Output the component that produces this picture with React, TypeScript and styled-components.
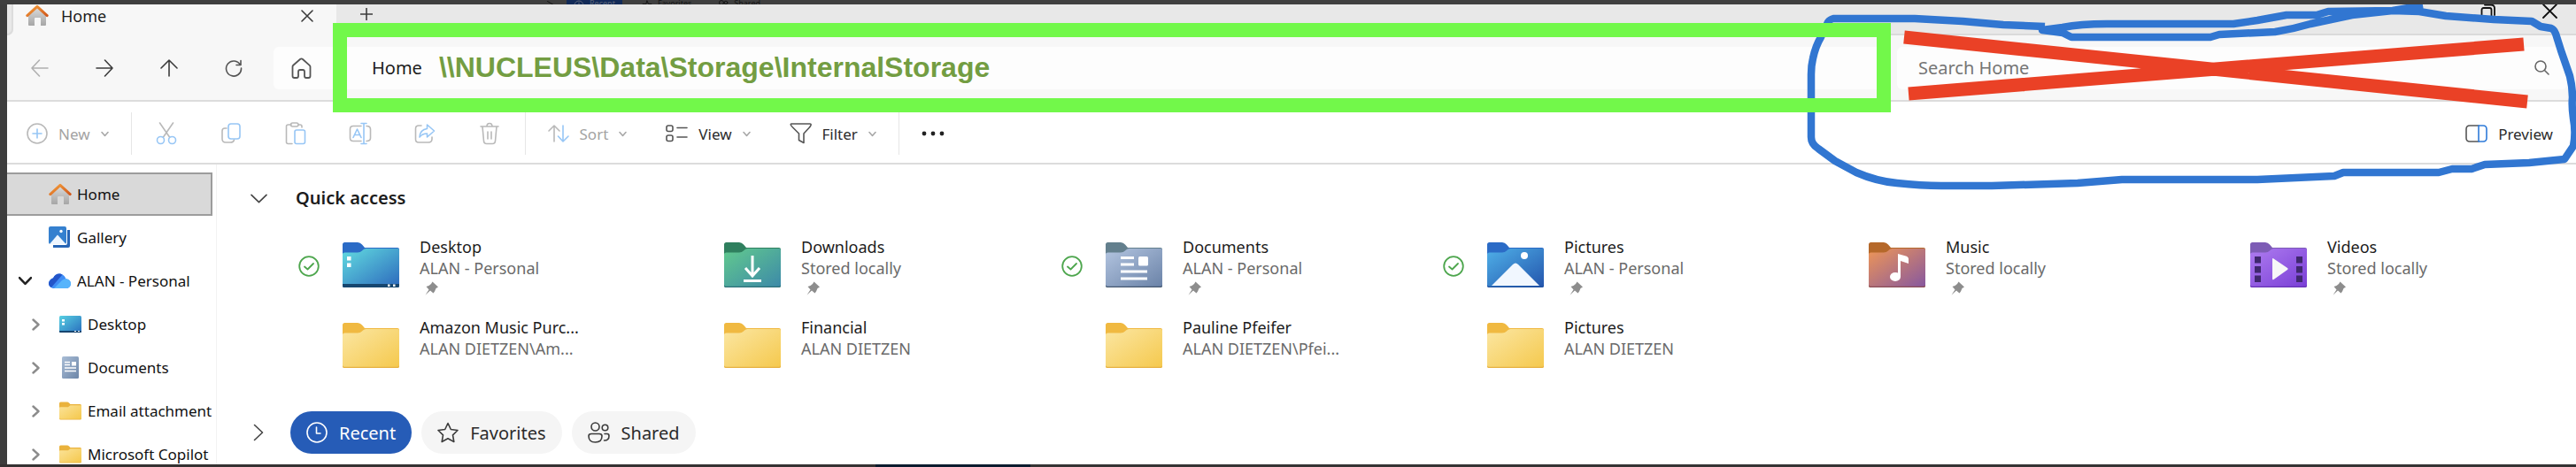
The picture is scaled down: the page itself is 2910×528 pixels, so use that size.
import React from 'react';
import styled, { createGlobalStyle, css } from 'styled-components';

const GlobalStyle = createGlobalStyle`
  *, *::before, *::after { box-sizing: border-box; }
  html, body { margin: 0; }
  body { background: #3d3d3d; font-family: "Noto Sans", "Open Sans", sans-serif; color: #1c1c1c; }
  button, input { font: inherit; color: inherit; margin: 0; }
  svg { display: block; flex: none; }
`;

/* ---------- shell ---------- */

const Screen = styled.div`
  display: flex;
  flex-direction: column;
  height: 100vh;
  overflow: hidden;
`;

const BackdropTop = styled.div`
  display: flex;
  flex: none;
  align-items: flex-start;
  gap: 14px;
  height: 5px;
  padding-left: 617px;
  overflow: hidden;
  background: #3f3f3f;
  color: #161616;
  font-size: 9px;
  line-height: 8px;
`;

const BackdropItem = styled.span<{ $active?: boolean }>`
  display: flex;
  gap: 6px;
  height: 12px;
  padding: 0 8px;
  background: ${(p) => (p.$active ? '#122a57' : 'transparent')};
  color: ${(p) => (p.$active ? '#5a6478' : 'inherit')};
`;

const BackdropBottom = styled.div`
  flex: none;
  height: 3px;
  background: linear-gradient(90deg, #353232 34%, #0b1c2e 34% 40%, #353434 40%);
`;

const Window = styled.div`
  position: relative;
  display: flex;
  flex: 1;
  flex-direction: column;
  min-height: 0;
  margin-left: 8px;
  overflow: hidden;
  background: #fff;
`;

/* ---------- tab strip ---------- */

const TabStrip = styled.div`
  display: flex;
  flex: none;
  height: 35px;
  background: #e8e8e8;
`;

const TabEdge = styled.div`
  width: 7px;
  border-right: 2px solid #dcdcdc;
  border-bottom: 2px solid #dcdcdc;
  border-bottom-right-radius: 7px;
  box-shadow: 0 4px 0 4px #f7f7f7;
`;

const Tab = styled.div`
  display: flex;
  align-items: center;
  width: 365px;
  padding: 0 26px 10px 14px;
  background: #f7f7f7;
  font-size: 18px;
  line-height: 24px;
`;

const TabLabel = styled.span`
  flex: 1;
  margin-left: 14px;
`;

const TabStripRest = styled.div`
  display: flex;
  flex: 1;
  align-items: center;
  padding: 0 21px 12px 27px;
  border-bottom: 2px solid #dadada;
`;

const Spacer = styled.div`
  flex: 1;
`;

const PlainButton = styled.button`
  display: flex;
  align-items: center;
  justify-content: center;
  padding: 0;
  border: 0;
  background: none;
`;

const WindowButtons = styled.div`
  display: flex;
  gap: 52px;
  margin-bottom: 6px;
`;

/* ---------- navigation bar ---------- */

const NavBar = styled.div`
  display: flex;
  flex: none;
  height: 75px;
  align-items: center;
  padding-right: 10px;
  border-bottom: 2px solid #dcdcdc;
  background: #f7f7f7;
`;

const NavButton = styled(PlainButton)`
  width: 73px;
  height: 48px;
`;

const AddressBar = styled.div`
  position: relative;
  display: flex;
  flex: 1800 1 0;
  align-items: center;
  min-width: 0;
  height: 48px;
  margin: 0 14px 0 9px;
  padding-left: 20px;
  border-radius: 6px;
  background: #fdfdfd;
  font-size: 20px;
`;

const Crumb = styled(PlainButton)`
  margin-left: 68px;
`;

const PathNote = styled.strong`
  z-index: 3;
  margin-left: 19px;
  color: #739d42;
  font: bold 32px "Liberation Sans", Arial, sans-serif;
  white-space: nowrap;
`;

const GreenFrame = styled.div`
  position: absolute;
  z-index: 3;
  inset: -27px -7px -26px 67px;
  border: 16px solid #72f84a;
  pointer-events: none;
`;

const SearchBox = styled.label`
  display: flex;
  flex: 713 1 0;
  align-items: center;
  min-width: 0;
  height: 48px;
  padding: 0 20px 0 24px;
  border-radius: 6px;
  background: #fdfdfd;
`;

const SearchInput = styled.input`
  flex: 1;
  min-width: 0;
  padding: 0;
  border: 0;
  outline: 0;
  background: none;
  font-size: 20px;
  &::placeholder { color: #757575; opacity: 1; }
`;

/* ---------- command bar ---------- */

const CommandBar = styled.div`
  display: flex;
  flex: none;
  height: 71px;
  align-items: center;
  padding: 3px 4px 0 0;
  border-bottom: 2px solid #dcdcdc;
  background: #fff;
`;

const Divider = styled.div`
  width: 1px;
  height: 48px;
  margin: 0 3px;
  background: #e6e6e6;
`;

const CommandButton = styled(PlainButton)<{ $muted?: boolean }>`
  gap: 12px;
  height: 48px;
  padding: 0 22px;
  color: ${(p) => (p.$muted ? '#a3a3a3' : '#2b2b2b')};
  font-size: 17px;
`;

const IconButton = styled(PlainButton)`
  width: 73px;
  height: 48px;
`;

/* ---------- body ---------- */

const Body = styled.div`
  display: flex;
  flex: 1;
  min-height: 0;
`;

const Sidebar = styled.nav`
  flex: none;
  width: 237px;
  padding-top: 9px;
  overflow: hidden;
  border-right: 1px solid #f2f2f2;
`;

const SideItem = styled.a<{ $nested?: boolean; $selected?: boolean }>`
  display: flex;
  align-items: center;
  height: 49px;
  padding-left: ${(p) => (p.$nested ? 25 : 13)}px;
  color: #111;
  font-size: 17px;
  text-decoration: none;
  white-space: nowrap;
  ${(p) =>
    p.$selected &&
    css`
      width: 232px;
      border: 2px solid #9c9c9c;
      border-left: 0;
      background: #d9d9d9;
    `}
`;

const ChevronSlot = styled.span`
  display: flex;
  flex: none;
  justify-content: center;
  width: 14px;
  margin-right: 20px;
`;

const IconSlot = styled.span`
  display: flex;
  flex: none;
  justify-content: center;
  width: 25px;
  margin-right: 7px;
`;

const Main = styled.main`
  flex: 1;
  min-width: 0;
  overflow: hidden;
`;

const SectionHead = styled.div`
  display: flex;
  align-items: center;
  height: 76px;
  padding-left: 38px;
  gap: 32px;
`;

const SectionTitle = styled.h2`
  margin: 0;
  font-size: 20px;
  font-weight: 600;
  line-height: 28px;
`;

const TileGrid = styled.div`
  display: grid;
  grid-template-columns: repeat(6, 1fr);
  grid-auto-rows: 91px;
  margin-left: 79px;
`;

const Tile = styled.div`
  display: flex;
  align-items: flex-start;
  min-width: 0;
  padding: 5px 0 0 13px;
`;

const SyncSlot = styled.div`
  width: 24px;
  margin: 22px 26px 0 0;
`;

const TileIcon = styled.div`
  margin: 7px 23px 0 0;
`;

const TileText = styled.div`
  font-size: 18px;
  line-height: 24px;
  white-space: nowrap;
`;

const TileDetail = styled.div`
  margin-bottom: 3px;
  color: #6a6a6a;
`;

const FilterRow = styled.div`
  display: flex;
  align-items: center;
  gap: 11px;
  margin-top: 21px;
  padding-left: 38px;
`;

const ExpandButton = styled(PlainButton)`
  width: 18px;
  margin-right: 16px;
`;

const Pill = styled.button<{ $active?: boolean }>`
  display: flex;
  align-items: center;
  gap: 13px;
  height: 48px;
  padding: 0 18px;
  border: 0;
  border-radius: 24px;
  background: ${(p) => (p.$active ? '#265cb7' : '#f5f5f5')};
  color: ${(p) => (p.$active ? '#fff' : '#2b2b2b')};
  font-size: 20px;
`;

/* ---------- freehand marks ---------- */

const Marks = styled.svg`
  position: absolute;
  z-index: 2;
  top: -5px;
  right: 0;
  pointer-events: none;
`;

/* ---------- icons ---------- */

type LineProps = { w: number; h: number; color?: string; sw?: number; children: React.ReactNode };

const Line = ({ w, h, color = '#3c3c3c', sw = 1.6, children }: LineProps) => (
  <svg width={w} height={h} viewBox={`0 0 ${w} ${h}`} fill="none" stroke={color} strokeWidth={sw} strokeLinecap="round" strokeLinejoin="round" aria-hidden="true">
    {children}
  </svg>
);

const GREY = '#b9b9b9';
const BLUE = '#97c6f5';

const ChevronDown = ({ size = 9, color = '#a8a8a8', sw = 1.6 }) => (
  <Line w={size} h={size} color={color} sw={sw}>
    <path d={`M1 ${size * 0.28}L${size / 2} ${size * 0.72}L${size - 1} ${size * 0.28}`} />
  </Line>
);

const ChevronRight = ({ w = 9, h = 14, color = '#8c8c8c', sw = 2.4 }) => (
  <Line w={w} h={h} color={color} sw={sw}>
    <path d={`M1.5 1.5L${w - 1.5} ${h / 2}L1.5 ${h - 1.5}`} />
  </Line>
);

const HouseIcon = ({ id }: { id: string }) => (
  <svg width="26" height="25" viewBox="0 0 26 25" aria-hidden="true">
    <defs>
      <linearGradient id={`${id}w`} x1="0" y1="0" x2="0" y2="1">
        <stop offset="0" stopColor="#dedede" />
        <stop offset="1" stopColor="#a6a6a6" />
      </linearGradient>
      <linearGradient id={`${id}r`} x1="0" y1="0" x2="1" y2="1">
        <stop offset="0" stopColor="#f5a03c" />
        <stop offset="1" stopColor="#d1581c" />
      </linearGradient>
    </defs>
    <path d="M3 11L13 2L23 11V23Q23 24 22 24H17V16Q17 15 16 15H11Q10 15 10 16V24H4Q3 24 3 23Z" fill={`url(#${id}w)`} />
    <path d="M1.8 12.6L13 2.4L24.2 12.6" fill="none" stroke={`url(#${id}r)`} strokeWidth="3" strokeLinecap="round" strokeLinejoin="round" />
  </svg>
);

const GalleryIcon = () => (
  <svg width="25" height="25" viewBox="0 0 25 25" aria-hidden="true">
    <path d="M5 4H24V22Q24 24 22 24H5Z" fill="#2765b5" />
    <rect x="0" y="0" width="21" height="21" rx="2" fill="#fff" />
    <rect x="0" y="0" width="20" height="20" rx="2" fill="#3580cf" />
    <path d="M1 20L10 9.5L19.500 20Z" fill="#eef6ff" />
    <circle cx="14" cy="5.500" r="1.700" fill="#fff" />
  </svg>
);

const CloudIcon = () => (
  <svg width="25" height="18" viewBox="0 0 25 18" aria-hidden="true">
    <path d="M6 17C2.500 17 0 14.500 0 11.500S2.300 6 5 5.500C6.500 2 9 .5 12 .5C15.500 .5 18.500 3 19.300 6.200C22.500 6.500 25 8.800 25 11.700S22.700 17 19.500 17Z" fill="#3f8df5" />
    <path d="M5 5.500C6.500 2 9 .5 12 .5C13 .5 14.500 1 15.500 1.600L3 16C1 15 0 13 0 11.500S2.300 6 5 5.500Z" fill="#2355c9" />
    <path d="M6 17L15 8C17 6.200 19 6 20 6.300C23 6.700 25 9 25 11.700S22.700 17 19.500 17Z" fill="#57b4fb" />
  </svg>
);

const MiniDesktop = () => (
  <svg width="25" height="19" viewBox="0 0 25 19" aria-hidden="true">
    <defs>
      <linearGradient id="mini-desk" x1="0" y1="0" x2="1" y2="1">
        <stop offset="0" stopColor="#57d0e2" />
        <stop offset="1" stopColor="#2a6fbe" />
      </linearGradient>
    </defs>
    <rect width="25" height="19" rx="1.500" fill="url(#mini-desk)" />
    <path d="M0 17H25V18Q25 19 24 19H1Q0 19 0 18Z" fill="#17456f" />
    <path d="M3 4H6V6.500H3ZM3 8H6V10.500H3ZM17 17H19V18H17ZM21 17H23V18H21Z" fill="#fff" />
  </svg>
);

const MiniDocument = () => (
  <svg width="19" height="25" viewBox="0 0 19 25" aria-hidden="true">
    <defs>
      <linearGradient id="mini-doc" x1="0" y1="0" x2="1" y2="1">
        <stop offset="0" stopColor="#a9bdd6" />
        <stop offset="1" stopColor="#6d86a8" />
      </linearGradient>
    </defs>
    <rect width="19" height="25" rx="1.500" fill="url(#mini-doc)" />
    <path d="M3 6.500H9M3 9.500H9M3 13H16M3 16.500H16" stroke="#fff" strokeWidth="1.500" />
    <rect x="11" y="6" width="5" height="4.500" fill="#fff" />
  </svg>
);

const MiniFolder = () => (
  <svg width="25" height="21" viewBox="0 0 25 21" aria-hidden="true">
    <defs>
      <linearGradient id="mini-fold" x1="0" y1="0" x2="1" y2="1">
        <stop offset="0" stopColor="#fbe39a" />
        <stop offset="1" stopColor="#f5c84c" />
      </linearGradient>
    </defs>
    <path d="M0 2Q0 .5 1.500 .5H9Q10 .5 11 1.500L12.500 3H23.500Q25 3 25 4.500V19Q25 20.500 23.500 20.500H1.500Q0 20.500 0 19Z" fill="#eab23c" />
    <path d="M0 7Q0 6.200 1 6.200H10L12.500 4.200H25V18.500Q25 19.700 23.500 19.700H1.500Q0 19.700 0 18.500Z" fill="url(#mini-fold)" />
  </svg>
);

type FolderKind = 'desktop' | 'downloads' | 'documents' | 'pictures' | 'music' | 'videos' | 'plain';

const FOLDERS: Record<FolderKind, { tab: string; from: string; to: string; edge: string }> = {
  desktop: { tab: '#2b6bc6', from: '#62dce0', to: '#2d6abd', edge: '#16466f' },
  downloads: { tab: '#2f7f5e', from: '#62ca8e', to: '#3d8aa8', edge: '#2b6f78' },
  documents: { tab: '#637f8d', from: '#b3c5e0', to: '#6b83a8', edge: '#42556e' },
  pictures: { tab: '#2b6bc6', from: '#4fb0e8', to: '#2456ad', edge: '#1d4f9f' },
  music: { tab: '#b5682a', from: '#ee9657', to: '#87589f', edge: '#8a4c55' },
  videos: { tab: '#7d5cb5', from: '#ae7cf0', to: '#7a3fd6', edge: '#6531b5' },
  plain: { tab: '#f0b941', from: '#fbe6a2', to: '#f5c94e', edge: '#e6b040' },
};

const FolderArt = ({ kind }: { kind: FolderKind }) => {
  switch (kind) {
    case 'desktop':
      return (
        <>
          <path d="M0 47H64V49Q64 51 62 51H2Q0 51 0 49Z" fill="#16466f" />
          <path d="M5 16H9.500V20.500H5ZM5 23.500H9.500V28H5ZM51 47.500H53.500V50H51ZM57 47.500H59.500V50H57Z" fill="#fff" />
        </>
      );
    case 'downloads':
      return <path d="M32 15V37M24 29L32 38L40 29M22 43.500H42" fill="none" stroke="#fff" strokeWidth="3" />;
    case 'documents':
      return (
        <>
          <path d="M17 17.500H32M17 25H32M17 33H47M17 41H47" stroke="#fff" strokeWidth="3.200" />
          <rect x="37" y="16" width="11" height="10.500" rx="1.500" fill="#fff" />
        </>
      );
    case 'pictures':
      return (
        <>
          <path d="M5 49L29 25Q32 22 35 25L59 49Z" fill="#f1f7ff" />
          <circle cx="42" cy="15" r="4" fill="#fff" />
        </>
      );
    case 'music':
      return (
        <>
          <path d="M33 13L42 15.500Q45 16.500 45 19V24L36 21V39H33Z" fill="#fff" />
          <ellipse cx="30" cy="39" rx="6" ry="5" fill="#fff" />
        </>
      );
    case 'videos':
      return (
        <>
          <path d="M5 16H12V23.500H5ZM5 27H12V34.500H5ZM5 37.500H12V45H5ZM52 16H59V23.500H52ZM52 27H59V34.500H52ZM52 37.500H59V45H52Z" fill="#40286f" />
          <path d="M25 19Q25 17.500 26.500 18.500L42 29Q43.500 30 42 31L26.500 42Q25 43 25 41Z" fill="#f7f7f7" />
        </>
      );
    default:
      return null;
  }
};

const FolderIcon = ({ kind }: { kind: FolderKind }) => {
  const c = FOLDERS[kind];
  return (
    <svg width="64" height="51" viewBox="0 0 64 51" aria-hidden="true">
      <defs>
        <linearGradient id={`folder-${kind}`} x1="0" y1="0" x2="1" y2="1">
          <stop offset="0" stopColor={c.from} />
          <stop offset="1" stopColor={c.to} />
        </linearGradient>
      </defs>
      <path d="M0 2.500Q0 0 2.500 0H17Q20 0 22 2.500L25 6H62Q64 6 64 8V49Q64 51 62 51H2Q0 51 0 49Z" fill={c.tab} />
      <path d="M0 40V49Q0 51 2 51H62Q64 51 64 49V40Z" fill={c.edge} />
      <path d="M0 13.500Q0 11.500 2.500 11.500H17Q20 11.500 22 9.500L23 8.500Q24.500 7 26.500 7H62.500Q64 7 64 9V48Q64 49.800 62 49.800H2Q0 49.800 0 48Z" fill={`url(#folder-${kind})`} />
      <FolderArt kind={kind} />
    </svg>
  );
};

const SyncedIcon = () => (
  <Line w={24} h={24} color="#4da64d" sw={1.8}>
    <circle cx="12" cy="12" r="10.800" />
    <path d="M7 12.500L10.500 15.500L17 9" />
  </Line>
);

const PinIcon = () => (
  <svg width="22" height="16" viewBox="0 0 22 16" aria-hidden="true">
    <path d="M14.500 .5L21 6.500L18.500 8L17 11.500L15.500 13.500L12 10.500L6.500 15.500L10.500 9.500L7.500 6L10.500 5L13 3Z" fill="#8d8d8d" />
  </svg>
);

/* ---------- data ---------- */

const TILES: { name: string; detail: string; kind: FolderKind; synced?: boolean; pinned?: boolean }[] = [
  { name: 'Desktop', detail: 'ALAN - Personal', kind: 'desktop', synced: true, pinned: true },
  { name: 'Downloads', detail: 'Stored locally', kind: 'downloads', pinned: true },
  { name: 'Documents', detail: 'ALAN - Personal', kind: 'documents', synced: true, pinned: true },
  { name: 'Pictures', detail: 'ALAN - Personal', kind: 'pictures', synced: true, pinned: true },
  { name: 'Music', detail: 'Stored locally', kind: 'music', pinned: true },
  { name: 'Videos', detail: 'Stored locally', kind: 'videos', pinned: true },
  { name: 'Amazon Music Purc...', detail: 'ALAN DIETZEN\\Am...', kind: 'plain' },
  { name: 'Financial', detail: 'ALAN DIETZEN', kind: 'plain' },
  { name: 'Pauline Pfeifer', detail: 'ALAN DIETZEN\\Pfei...', kind: 'plain' },
  { name: 'Pictures', detail: 'ALAN DIETZEN', kind: 'plain' },
];

const SIDE: { label: string; icon: React.ReactNode; nested?: boolean; selected?: boolean; open?: boolean }[] = [
  { label: 'Home', icon: <HouseIcon id="side" />, selected: true },
  { label: 'Gallery', icon: <GalleryIcon /> },
  { label: 'ALAN - Personal', icon: <CloudIcon />, open: true },
  { label: 'Desktop', icon: <MiniDesktop />, nested: true },
  { label: 'Documents', icon: <MiniDocument />, nested: true },
  { label: 'Email attachment', icon: <MiniFolder />, nested: true },
  { label: 'Microsoft Copilot', icon: <MiniFolder />, nested: true },
];

const CLIPBOARD: { label: string; icon: React.ReactNode }[] = [
  {
    label: 'Cut',
    icon: (
      <Line w={24} h={26} color={GREY}>
        <path d="M4.500 1L15.500 17M19.500 1L8.500 17" />
        <g stroke={BLUE}>
          <circle cx="5.500" cy="20.500" r="4" />
          <circle cx="18.500" cy="20.500" r="4" />
        </g>
      </Line>
    ),
  },
  {
    label: 'Copy',
    icon: (
      <Line w={24} h={24} color={GREY}>
        <path d="M7 6H5Q2 6 2 9V18Q2 22 6 22H11Q15 22 15.500 19" />
        <rect x="9" y="1" width="13" height="17" rx="3" stroke={BLUE} />
      </Line>
    ),
  },
  {
    label: 'Paste',
    icon: (
      <Line w={24} h={26} color={GREY}>
        <path d="M7 3H3.500Q1.500 3 1.500 5V22.500Q1.500 24.500 3.500 24.500H8M15 3H17Q19 3 19 5V6" />
        <rect x="6.500" y="1" width="8.500" height="4" rx="2" />
        <rect x="11" y="9" width="11.500" height="15.500" rx="2" stroke={BLUE} />
      </Line>
    ),
  },
  {
    label: 'Rename',
    icon: (
      <Line w={26} h={26} color={GREY}>
        <path d="M14 4.500H5Q1.500 4.500 1.500 8V18Q1.500 21.500 5 21.500H14M20 4.500Q24.500 4.500 24.500 8V18Q24.500 21.500 20 21.500" />
        <path d="M5 17.500L9.500 8L14 17.500M6.500 14.500H12.500M17 1.500V24.500M14 1.500H20M14 24.500H20" stroke={BLUE} />
      </Line>
    ),
  },
  {
    label: 'Share',
    icon: (
      <Line w={24} h={24} color={GREY}>
        <path d="M8 3H5Q1.500 3 1.500 6.500V18.500Q1.500 22 5 22H16Q20 22 20 18V16" />
        <path d="M14.500 2L22.500 9L14.500 16V12Q9 12 6 16Q6.500 7.500 14.500 6.500Z" stroke={BLUE} />
      </Line>
    ),
  },
  {
    label: 'Delete',
    icon: (
      <Line w={24} h={26} color={GREY}>
        <path d="M2 5H22M4 5L5.500 21.500Q5.800 24.500 8.500 24.500H15.500Q18.200 24.500 18.500 21.500L20 5M9 5Q9 1.500 12 1.500T15 5M10 11V19M14 11V19" />
      </Line>
    ),
  },
];

export default function App() {
  return (
    <Screen>
      <GlobalStyle />
      <BackdropTop aria-hidden="true">
        <ChevronRight w={9} h={10} color="#161616" sw={1} />
        <BackdropItem $active>
          <Line w={12} h={12} color="#5a6478" sw={1}>
            <circle cx="6" cy="6" r="5" />
            <path d="M6 3V7H8" />
          </Line>
          Recent
        </BackdropItem>
        <BackdropItem>
          <Line w={12} h={12} color="#161616" sw={1}>
            <path d="M6 1L7.500 4.500H11L8.500 7L9.500 11L6 9L2.500 11L3.500 7L1 4.500H4.500Z" />
          </Line>
          Favorites
        </BackdropItem>
        <BackdropItem>
          <Line w={12} h={12} color="#161616" sw={1}>
            <circle cx="4" cy="3" r="2.500" />
            <circle cx="9" cy="3" r="1.800" />
          </Line>
          Shared
        </BackdropItem>
      </BackdropTop>

      <Window>
        <TabStrip>
          <TabEdge />
          <Tab>
            <HouseIcon id="tab" />
            <TabLabel>Home</TabLabel>
            <PlainButton aria-label="Close tab">
              <Line w={14} h={14}>
                <path d="M1 1L13 13M13 1L1 13" />
              </Line>
            </PlainButton>
          </Tab>
          <TabStripRest>
            <PlainButton aria-label="New tab">
              <Line w={14} h={14}>
                <path d="M7 0.500V13.500M0.500 7H13.500" />
              </Line>
            </PlainButton>
            <Spacer />
            <WindowButtons>
              <PlainButton aria-label="Restore">
                <Line w={18} h={18} color="#111" sw={1.8}>
                  <rect x="1.500" y="5" width="11" height="12" rx="2" />
                  <path d="M5 1.500H12Q16 1.500 16 5.500V13" />
                </Line>
              </PlainButton>
              <PlainButton aria-label="Close">
                <Line w={17} h={17} color="#111" sw={1.8}>
                  <path d="M1 1L16 16M16 1L1 16" />
                </Line>
              </PlainButton>
            </WindowButtons>
          </TabStripRest>
        </TabStrip>

        <NavBar>
          <NavButton aria-label="Back">
            <Line w={20} h={20} color="#b0b0b0">
              <path d="M19 10H1M9.500 1L1 10L9.500 19" />
            </Line>
          </NavButton>
          <NavButton aria-label="Forward">
            <Line w={20} h={20}>
              <path d="M1 10H19M10.500 1L19 10L10.500 19" />
            </Line>
          </NavButton>
          <NavButton aria-label="Up">
            <Line w={20} h={20}>
              <path d="M10 19V1M1 10L10 1L19 10" />
            </Line>
          </NavButton>
          <NavButton aria-label="Refresh">
            <Line w={20} h={20} color="#555">
              <path d="M17.500 6.500A8.500 8.500 0 1 0 18.500 10M18 1.500V6.500H13" />
            </Line>
          </NavButton>
          <AddressBar>
            <PlainButton aria-label="Home folder">
              <Line w={23} h={24} color="#555" sw={1.8}>
                <path d="M1.500 10.500Q1.500 9.500 2.300 8.800L10 2Q11.500 .8 13 2L20.700 8.800Q21.500 9.500 21.500 10.500V21Q21.500 23 19.500 23H17Q15 23 15 21V16Q15 14 13 14H10Q8 14 8 16V21Q8 23 6 23H3.500Q1.500 23 1.500 21Z" />
              </Line>
            </PlainButton>
            <Crumb>Home</Crumb>
            <PathNote>{'\\\\NUCLEUS\\Data\\Storage\\InternalStorage'}</PathNote>
            <GreenFrame />
          </AddressBar>
          <SearchBox>
            <SearchInput type="text" placeholder="Search Home" aria-label="Search Home" />
            <Line w={17} h={17} color="#666">
              <circle cx="7" cy="7" r="6" />
              <path d="M11.500 11.500L16 16" />
            </Line>
          </SearchBox>
        </NavBar>

        <CommandBar>
          <CommandButton $muted>
            <Line w={24} h={24} color={GREY}>
              <circle cx="12" cy="12" r="11" />
              <path d="M12 7V17M7 12H17" stroke={BLUE} />
            </Line>
            New
            <ChevronDown />
          </CommandButton>
          <Divider />
          {CLIPBOARD.map((c) => (
            <IconButton key={c.label} aria-label={c.label}>
              {c.icon}
            </IconButton>
          ))}
          <Divider />
          <CommandButton $muted>
            <Line w={24} h={20} color={GREY}>
              <path d="M7 19V1M1 7L7 1L13 7" />
              <path d="M17 1V19M11.500 13L17 19L23 13" stroke={BLUE} />
            </Line>
            Sort
            <ChevronDown />
          </CommandButton>
          <CommandButton>
            <Line w={25} h={20} color="#555">
              <rect x="1" y="1" width="7" height="6.500" rx="2" />
              <rect x="1" y="12" width="7" height="6.500" rx="2" />
              <path d="M13 3.500H24M13 14H24" />
            </Line>
            View
            <ChevronDown />
          </CommandButton>
          <CommandButton>
            <Line w={25} h={24} color="#555">
              <path d="M2 1H23Q24.500 1 24 2.500Q23.500 4 22 5.500L16 12V22.500L10.500 19.500V12L4 5.500Q2 3.500 1.500 2.500Q1 1 2 1Z" />
            </Line>
            Filter
            <ChevronDown />
          </CommandButton>
          <Divider />
          <CommandButton aria-label="More options">
            <svg width="26" height="6" viewBox="0 0 26 6" fill="#222" aria-hidden="true">
              <circle cx="3" cy="3" r="2.400" />
              <circle cx="13" cy="3" r="2.400" />
              <circle cx="23" cy="3" r="2.400" />
            </svg>
          </CommandButton>
          <Spacer />
          <CommandButton>
            <Line w={25} h={20} color="#555">
              <path d="M15 1H5Q1 1 1 5V15Q1 19 5 19H15" />
              <path d="M15 1H20Q24 1 24 5V15Q24 19 20 19H15Z" stroke="#2f7bd9" />
            </Line>
            Preview
          </CommandButton>
        </CommandBar>

        <Body>
          <Sidebar aria-label="Folders">
            {SIDE.map((s) => (
              <SideItem key={s.label} href="#" $nested={s.nested} $selected={s.selected}>
                <ChevronSlot>
                  {s.open && <ChevronDown size={15} color="#222" sw={2.6} />}
                  {s.nested && <ChevronRight />}
                </ChevronSlot>
                <IconSlot>{s.icon}</IconSlot>
                {s.label}
              </SideItem>
            ))}
          </Sidebar>
          <Main>
            <SectionHead>
              <PlainButton aria-label="Collapse Quick access">
                <ChevronDown size={19} color="#444" sw={1.6} />
              </PlainButton>
              <SectionTitle>Quick access</SectionTitle>
            </SectionHead>
            <TileGrid>
              {TILES.map((t) => (
                <Tile key={t.name + t.detail}>
                  <SyncSlot>{t.synced && <SyncedIcon />}</SyncSlot>
                  <TileIcon>
                    <FolderIcon kind={t.kind} />
                  </TileIcon>
                  <TileText>
                    <div>{t.name}</div>
                    <TileDetail>{t.detail}</TileDetail>
                    {t.pinned && <PinIcon />}
                  </TileText>
                </Tile>
              ))}
            </TileGrid>
            <FilterRow>
              <ExpandButton aria-label="Expand recent files">
                <ChevronRight w={12} h={20} color="#444" sw={1.6} />
              </ExpandButton>
              <Pill $active>
                <Line w={24} h={24} color="#fff">
                  <circle cx="12" cy="12" r="11" />
                  <path d="M11.500 6V13H16" />
                </Line>
                Recent
              </Pill>
              <Pill>
                <Line w={24} h={24}>
                  <path d="M12 1.500L15.300 8.500L23 9.500L17.500 14.800L18.800 22.500L12 18.800L5.200 22.500L6.500 14.800L1 9.500L8.700 8.500Z" />
                </Line>
                Favorites
              </Pill>
              <Pill>
                <Line w={25} h={24}>
                  <circle cx="8.500" cy="5.500" r="4.500" />
                  <circle cx="19.500" cy="6.500" r="3.300" />
                  <path d="M4 13.500H13Q16 13.500 16 16Q16 23 8.500 23T1 16Q1 13.500 4 13.500ZM19 13.500H22Q24 13.500 24 16Q24 21 18.500 21" />
                </Line>
                Shared
              </Pill>
            </FilterRow>
          </Main>
        </Body>

        <Marks width="880" height="220" viewBox="0 0 880 220" fill="none" aria-hidden="true">
          <g stroke="#3176d1" strokeWidth="8.500" strokeLinejoin="round">
            <path d="M280 30L233 28L187 24L133 21H41Q37 22 35 25L27 42Q21 52 18 66Q16 74 16 84V155Q16 163 24 168L43 182L67 195Q90 205 113 207Q140 210 163 210H220L317 207L367 203H520L607 199L617 195H725L740 191H762L777 186L827 184L867 180L877 165Q880 150 877 134Q875 120 876 110Q876 98 873 86L863 57L857 38Q855 33 852 32L840 30L830 24L787 22L733 18L703 13L673 12L600 13L587 17L553 17L520 23L493 27H350Q320 27 300 31L277 34L300 37L310 42H467L477 39L540 36Q560 33 580 27L627 17L673 12L707 6" />
          </g>
          <path d="M121 42L825 115M126 106L821 50" stroke="#ea4126" strokeWidth="15" />
        </Marks>
      </Window>
      <BackdropBottom />
    </Screen>
  );
}
